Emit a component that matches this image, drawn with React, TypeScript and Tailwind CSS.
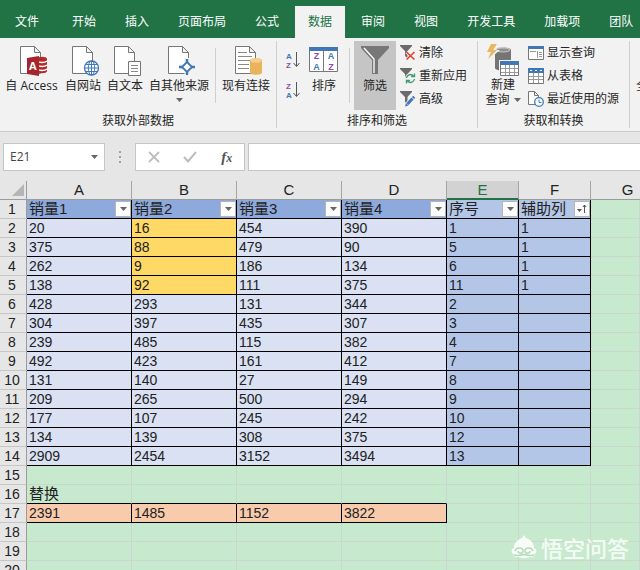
import type { ReactNode } from "react";

const tabs = ["开始", "插入", "页面布局", "公式", "数据", "审阅", "视图", "开发工具", "加载项", "团队"];
const columns = ["A", "B", "C", "D", "E", "F", "G"];
const headers = ["销量1", "销量2", "销量3", "销量4", "序号", "辅助列"];

const rows = [
  ["20", "16", "454", "390", "1", "1"],
  ["375", "88", "479", "90", "5", "1"],
  ["262", "9", "186", "134", "6", "1"],
  ["138", "92", "111", "375", "11", "1"],
  ["428", "293", "131", "344", "2", ""],
  ["304", "397", "435", "307", "3", ""],
  ["239", "485", "115", "382", "4", ""],
  ["492", "423", "161", "412", "7", ""],
  ["131", "140", "27", "149", "8", ""],
  ["209", "265", "500", "294", "9", ""],
  ["177", "107", "245", "242", "10", ""],
  ["134", "139", "308", "375", "12", ""],
  ["2909", "2454", "3152", "3494", "13", ""],
];

const totals = ["2391", "1485", "1152", "3822"];

const Page = () => (
  <path d="M.5.5h14l6 6v21H.5zM14.5.5v6h6" fill="#fff" stroke="#777" />
);

const AccessIcon = () => (
  <svg width="33" height="30" viewBox="-5 0 33 30">
    <Page />
    <path d="M17 13c0-3 10-3 10 0v12c0 3-10 3-10 0z" fill="#b3272d" />
    <path d="M17 15c2 2 8 2 10 0M17 19c2 2 8 2 10 0M17 23c2 2 8 2 10 0" fill="none" stroke="#fff" strokeWidth="1.3" />
    <path d="M7 12l12-2v20L7 28z" fill="#a4262c" />
    <text x="9" y="24" fontSize="11" fontWeight="700" fill="#fff" className="font-['Open_Sans',sans-serif]">A</text>
  </svg>
);

const WebIcon = () => (
  <svg width="33" height="30" viewBox="-5 0 33 30">
    <Page />
    <circle cx="19.500" cy="22" r="7" fill="#fff" stroke="#3f78b5" strokeWidth="1.3" />
    <ellipse cx="19.500" cy="22" rx="3.200" ry="7" fill="none" stroke="#3f78b5" />
    <path d="M12.500 22h14M19.500 15v14M14 18.500h11M14 25.500h11" stroke="#3f78b5" />
  </svg>
);

const TextIcon = () => (
  <svg width="33" height="30" viewBox="-5 0 33 30">
    <Page />
    <path d="M14.500 15.500h12v14h-12z" fill="#fff" stroke="#777" />
    <path d="M17 19.500h7M17 22.500h7M17 25.500h7" stroke="#888" />
  </svg>
);

const SourceIcon = () => (
  <svg width="33" height="30" viewBox="-5 0 33 30">
    <Page />
    <path d="M19 12v18M11 21h16" stroke="#f2f2f2" strokeWidth="5" />
    <path d="M19 13v4M19 25v4M11 21h4M23 21h4" stroke="#3f78b5" strokeWidth="2.400" />
    <path d="M19 16l5 5-5 5-5-5z" fill="#fff" stroke="#3f78b5" strokeWidth="1.800" />
  </svg>
);

const ConnectionIcon = () => (
  <svg width="33" height="30" viewBox="-5 0 33 30">
    <Page />
    <path d="M3 6.500h9M3 10.500h14M3 14.500h12M3 18.500h11M3 22.500h11" stroke="#888" />
    <path d="M15 14.500c0-3 12-3 12 0v12c0 3-12 3-12 0z" fill="#e9b45c" />
    <ellipse cx="21" cy="14.500" rx="6" ry="2.200" fill="#f3cf8d" />
  </svg>
);

const SortOrderIcon = ({ top, bottom }: { top: string; bottom: string }) => (
  <svg width="14" height="19" viewBox="0 0 14 19" className="font-['Liberation_Sans',sans-serif]">
    <text x="0" y="8" fontSize="8" fontWeight="700" fill={top === "A" ? "#3f78b5" : "#8b4fa8"}>{top}</text>
    <text x="0" y="17" fontSize="8" fontWeight="700" fill={bottom === "A" ? "#3f78b5" : "#8b4fa8"}>{bottom}</text>
    <path d="M10.500 1v14M7.500 12l3 3.500 3-3.500" fill="none" stroke="#555" />
  </svg>
);

const SortIcon = () => (
  <svg width="30" height="30" viewBox="0 0 30 30">
    <path d="M.5 1.500h28v24H.5z" fill="#fff" stroke="#777" />
    <path d="M0 1h29v4H0z" fill="#3f78b5" />
    <path d="M14.500 5v21" stroke="#777" />
    <g fontSize="9" fontWeight="700" textAnchor="middle" className="font-['Liberation_Sans',sans-serif]">
      <text x="7.500" y="13" fill="#8b4fa8">Z</text>
      <text x="7.500" y="24" fill="#3f78b5">A</text>
      <text x="22" y="13" fill="#3f78b5">A</text>
      <text x="22" y="24" fill="#8b4fa8">Z</text>
    </g>
  </svg>
);

const FilterIcon = () => (
  <svg width="28" height="30" viewBox="0 0 28 30">
    <path d="M0 0h28v2L17 14v14h-6V14L0 2z" fill="#777" />
    <path d="M3 2l10 11v14" fill="none" stroke="#fff" strokeWidth="1.300" />
  </svg>
);

const SmallFunnel = () => <path d="M0 0h12v1L7.500 6v7L5 11V6L0 1z" fill="#6b6b6b" />;

const ClearIcon = () => (
  <svg width="16" height="16" viewBox="0 0 16 16">
    <SmallFunnel />
    <path d="M6.500 7l8 8M14.500 7l-8 8" stroke="#f2f2f2" strokeWidth="3" />
    <path d="M6.500 7l8 7.500M14.500 7l-8 7.500" stroke="#e0402f" strokeWidth="1.600" />
  </svg>
);

const ReapplyIcon = () => (
  <svg width="16" height="16" viewBox="0 0 16 16">
    <SmallFunnel />
    <circle cx="10.500" cy="10.500" r="5.500" fill="#f2f2f2" />
    <path d="M6.500 10a4 4 0 0 1 7-2M14.500 11a4 4 0 0 1-7 2M14.500 5.500v3h-3.500M6.500 15.500v-3H10" fill="none" stroke="#4a9a76" strokeWidth="1.400" />
  </svg>
);

const AdvancedIcon = () => (
  <svg width="16" height="16" viewBox="0 0 16 16">
    <SmallFunnel />
    <path d="M6 15l8-8.500" stroke="#f2f2f2" strokeWidth="5" />
    <path d="M7.500 13l5-5.500M13 7l1.200-1.200" stroke="#3f78b5" strokeWidth="3" />
    <path d="M5 15.500l1-3.500 2.500 2.500z" fill="#3f78b5" />
  </svg>
);

const NewQueryIcon = () => (
  <svg width="34" height="33" viewBox="0 0 34 33">
    <path d="M9 6c0-3.500 16-3.500 16 0v18c0 3.500-16 3.500-16 0z" fill="#757575" />
    <ellipse cx="17" cy="6" rx="7" ry="2" fill="#8f8f8f" stroke="#f2f2f2" strokeWidth=".6" />
    <path d="M6-1h8l-4 7h4L1 17l4-8H0z" fill="#f2f2f2" />
    <path d="M5 0h6L7 6h4L2 15l3-7H1z" fill="#eab75f" />
    <path d="M13 16h20v16H13z" fill="#f2f2f2" />
    <path d="M14.500 17.500h18v14h-18z" fill="#fff" stroke="#777" />
    <path d="M14 17h19v4H14z" fill="#3f78b5" />
    <path d="M15 24.500h17M15 28.500h17M19.500 21v10M23.500 21v10M28.500 21v10" stroke="#999" />
  </svg>
);

const ShowQueryIcon = () => (
  <svg width="16" height="16" viewBox="0 0 16 16">
    <path d="M.5 1.500h15v13H.5z" fill="#fff" stroke="#777" />
    <path d="M0 1h16v3H0z" fill="#3f78b5" />
    <path d="M2 6.500h6M9.500 6v7M11 7.500h3M11 9.500h3M11 11.500h3" stroke="#999" />
  </svg>
);

const FromTableIcon = () => (
  <svg width="16" height="16" viewBox="0 0 16 16">
    <path d="M.5.5h15v15H.5z" fill="#fff" stroke="#777" />
    <path d="M0 0h16v5H0z" fill="#3f78b5" />
    <path d="M2 2.500h2M7 2.500h2M12 2.500h2" stroke="#fff" />
    <path d="M1 8.500h14M1 11.500h14M5.500 5v10M10.500 5v10" stroke="#999" />
  </svg>
);

const RecentIcon = () => (
  <svg width="16" height="16" viewBox="0 0 16 16">
    <path d="M.5.5h6l4 4v9H.5zM6.500.5v4h4" fill="#fff" stroke="#777" />
    <circle cx="11" cy="11" r="4.300" fill="#fff" stroke="#3f78b5" strokeWidth="1.300" />
    <path d="M11 8.500v3h2.500" fill="none" stroke="#3f78b5" />
  </svg>
);

const Caret = () => (
  <svg width="7" height="4" viewBox="0 0 7 4" className="shrink-0">
    <path d="M0 0h7L3.500 4z" fill="#666" />
  </svg>
);

const LargeButton = ({ icon, label, className = "", caret = false }: { icon: ReactNode; label: string; className?: string; caret?: boolean }) => (
  <button className={`flex h-[69px] shrink-0 flex-col items-center whitespace-nowrap pt-[5px] ${className}`}>
    {icon}
    <span className="mt-0.5 leading-4">{label}</span>
    {caret && <span className="mt-1"><Caret /></span>}
  </button>
);

const SmallButton = ({ icon, label }: { icon: ReactNode; label: string }) => (
  <button className="flex h-[23px] items-center gap-[3px] whitespace-nowrap">
    {icon}
    {label}
  </button>
);

const Divider = () => <div className="mt-[7px] h-[55px] w-px shrink-0 bg-[#cfcfcf]" />;

const Group = ({ title, children }: { title: string; children: ReactNode }) => (
  <section className="flex shrink-0 flex-col border-r border-[#cfcfcf]">
    <div className="flex h-[69px]">{children}</div>
    <h2 className="mt-[3px] text-center leading-4">{title}</h2>
  </section>
);

const Ribbon = () => (
  <div className="flex h-[94px] shrink-0 overflow-hidden border-b border-[#cdcdcd] bg-[#f2f2f2] py-[3px] font-['Open_Sans','Noto_Sans_CJK_SC',sans-serif] text-xs text-[#262626]">
    <Group title="获取外部数据">
      <div className="flex gap-[6px] pl-1 pr-[6px]">
        <LargeButton icon={<AccessIcon />} label="自 Access" className="w-[55px]" />
        <LargeButton icon={<WebIcon />} label="自网站" />
        <LargeButton icon={<TextIcon />} label="自文本" />
        <LargeButton icon={<SourceIcon />} label="自其他来源" caret />
      </div>
      <Divider />
      <div className="px-[6px]">
        <LargeButton icon={<ConnectionIcon />} label="现有连接" />
      </div>
    </Group>
    <Group title="排序和筛选">
      <div className="flex flex-col gap-[11px] px-[9px] pt-[10px]">
        <button aria-label="升序"><SortOrderIcon top="A" bottom="Z" /></button>
        <button aria-label="降序"><SortOrderIcon top="Z" bottom="A" /></button>
      </div>
      <LargeButton icon={<SortIcon />} label="排序" className="mr-[10px]" />
      <Divider />
      <LargeButton icon={<FilterIcon />} label="筛选" className="mx-1 w-[42px] bg-[#c5c5c5]" />
      <div className="pr-[10px]">
        <SmallButton icon={<ClearIcon />} label="清除" />
        <SmallButton icon={<ReapplyIcon />} label="重新应用" />
        <SmallButton icon={<AdvancedIcon />} label="高级" />
      </div>
    </Group>
    <Group title="获取和转换">
      <button className="flex w-[50px] flex-col items-center pt-[3px] leading-[15px]">
        <NewQueryIcon />
        <span>新建</span>
        <span className="flex items-center gap-1">查询<Caret /></span>
      </button>
      <div className="pr-[10px]">
        <SmallButton icon={<ShowQueryIcon />} label="显示查询" />
        <SmallButton icon={<FromTableIcon />} label="从表格" />
        <SmallButton icon={<RecentIcon />} label="最近使用的源" />
      </div>
    </Group>
    <button className="ml-[6px] mt-[37px] h-4 shrink-0 leading-4">全部刷新</button>
  </div>
);

const FormulaBar = () => (
  <div className="flex shrink-0 pb-[10px] pl-[3px] pt-[11px] text-[#444]">
    <div className="flex h-7 w-[102px] shrink-0 items-center border border-[#c6c6c6] bg-white">
      <input aria-label="名称框" defaultValue="E21" className="w-20 bg-transparent pl-[6px] font-['Open_Sans',sans-serif] text-xs outline-none" />
      <button aria-label="展开名称框" className="ml-[7px]"><Caret /></button>
    </div>
    <div className="flex w-[30px] shrink-0 flex-col items-center justify-center gap-[3px]">
      <i className="size-0.5 bg-[#a0a0a0]" />
      <i className="size-0.5 bg-[#a0a0a0]" />
      <i className="size-0.5 bg-[#a0a0a0]" />
    </div>
    <div className="flex h-7 w-[110px] shrink-0 items-center justify-around border border-[#c6c6c6] bg-white">
      <button aria-label="取消">
        <svg width="12" height="12" viewBox="0 0 12 12"><path d="M1 1l10 10M11 1L1 11" stroke="#bdbdbd" strokeWidth="1.800" /></svg>
      </button>
      <button aria-label="输入">
        <svg width="14" height="12" viewBox="0 0 14 12"><path d="M1 6l4 4.500L13 1" fill="none" stroke="#bdbdbd" strokeWidth="2" /></svg>
      </button>
      <button aria-label="插入函数" className="font-['Liberation_Serif',serif] text-[15px] font-bold italic leading-4 text-[#555]">
        f<span className="text-xs">x</span>
      </button>
    </div>
    <input aria-label="编辑栏" className="ml-[3px] h-7 min-w-0 flex-1 border border-r-0 border-[#c6c6c6] bg-white px-2 text-[13px] outline-none" />
  </div>
);

const FilterButton = ({ sorted }: { sorted: boolean }) => (
  <button aria-label="筛选" className="flex size-4 shrink-0 items-center justify-center border border-[#b5b5b5] bg-[#fcfcfc]">
    {sorted ? (
      <svg width="12" height="12" viewBox="0 0 12 12">
        <path d="M1 6h5L3.500 9z" fill="#555" />
        <path d="M8.500 10V2M7 4l1.500-2L10 4" fill="none" stroke="#555" />
      </svg>
    ) : (
      <Caret />
    )}
  </button>
);

const bodyColor = (row: number, col: number) => {
  if (col > 3) return "bg-[#b4c6e7]";
  if (col === 1 && row < 4) return "bg-[#ffd966]";
  return "bg-[#d9e1f2]";
};

const RowHeader = ({ n }: { n: number }) => (
  <th scope="row" className="h-[19px] border-b border-r border-b-[#c6c6c6] border-r-[#9b9b9b] bg-[#e6e6e6] p-0 pr-0.5 font-normal">
    {n}
  </th>
);

const Cell = ({ children, className = "border-[#c9d8cd]" }: { children?: ReactNode; className?: string }) => (
  <td className={`h-[19px] border-b border-r pl-0.5 ${className}`}>{children}</td>
);

const Sheet = () => (
  <table className="w-full table-fixed border-separate border-spacing-0 bg-[#c7eace] font-['Liberation_Sans','Noto_Sans_CJK_SC',sans-serif] text-sm leading-[18px] text-[#222]">
    <colgroup>
      <col className="w-[27px]" />
      <col className="w-[105px]" />
      <col className="w-[105px]" />
      <col className="w-[105px]" />
      <col className="w-[105px]" />
      <col className="w-[72px]" />
      <col className="w-[72px]" />
      <col />
    </colgroup>
    <thead>
      <tr className="bg-[#e6e6e6]">
        <td className="h-[19px] border-b border-r border-[#9b9b9b]">
          <svg width="12" height="12" viewBox="0 0 12 12" className="ml-3"><path d="M12 0v12H0z" fill="#b5b5b5" /></svg>
        </td>
        {columns.map((c) => (
          <th
            key={c}
            scope="col"
            className={`h-[19px] border-r border-r-[#a6a6a6] text-[15px] font-normal ${
              c === "E" ? "border-b-2 border-b-[#217346] bg-[#d2d2d2] leading-[17px] text-[#217346]" : "border-b border-b-[#9b9b9b]"
            } ${c === "G" ? "border-r-0 pl-6" : ""}`}
          >
            {c}
          </th>
        ))}
      </tr>
    </thead>
    <tbody>
      <tr>
        <RowHeader n={1} />
        {headers.map((h, i) => (
          <Cell key={h} className={`border-black text-[15px] ${i < 4 ? "bg-[#8ea9db]" : "bg-[#b4c6e7]"}`}>
            <div className="flex h-[18px] items-center justify-between whitespace-nowrap">
              {h}
              <FilterButton sorted={i === 5} />
            </div>
          </Cell>
        ))}
        <Cell />
      </tr>
      {rows.map((row, r) => (
        <tr key={r}>
          <RowHeader n={r + 2} />
          {row.map((v, c) => (
            <Cell key={c} className={`border-black ${bodyColor(r, c)}`}>{v}</Cell>
          ))}
          <Cell />
        </tr>
      ))}
      <tr>
        <RowHeader n={15} />
        {columns.map((c) => <Cell key={c} />)}
      </tr>
      <tr>
        <RowHeader n={16} />
        {columns.map((c, i) => (
          <Cell key={c} className={`border-r-[#c9d8cd] text-[15px] ${i < 4 ? "border-b-black" : "border-b-[#c9d8cd]"}`}>
            {i === 0 && "替换"}
          </Cell>
        ))}
      </tr>
      <tr>
        <RowHeader n={17} />
        {totals.map((v) => <Cell key={v} className="border-black bg-[#f8cbad]">{v}</Cell>)}
        <Cell />
        <Cell />
        <Cell />
      </tr>
      {[18, 19, 20].map((n) => (
        <tr key={n}>
          <RowHeader n={n} />
          {columns.map((c) => <Cell key={c} />)}
        </tr>
      ))}
    </tbody>
  </table>
);

const Watermark = () => (
  <div className="absolute bottom-[11px] right-[11px] flex items-center gap-1 text-[22px] font-medium leading-6 text-white/80">
    <svg width="26" height="24" viewBox="0 0 26 24">
      <path d="M13 0c1 2 2 3 4 4 3 1.500 6 4 6 9 3 1 3 5 .5 6 .5 2.500-2 4-4.500 3-4 1.500-8 1.500-12 0-2.500 1-5-.5-4.500-3C0 18 0 14 3 13c0-5 3-7.500 6-9 2-1 3-2 4-4z" fill="#fff" fillOpacity=".85" />
      <path d="M4 16c1-4 8-4 8 0 0 3-5 3-5 0M22 16c-1-4-8-4-8 0 0 3 5 3 5 0M3 20c3 1 6 .5 10-.5 4 1 7 1.500 10 .5" fill="none" stroke="#b4d9bc" strokeWidth="1.500" />
    </svg>
    悟空问答
  </div>
);

export default function App() {
  return (
    <div className="relative flex h-screen flex-col overflow-hidden bg-[#e6e6e6] font-['Noto_Sans_CJK_SC',sans-serif]">
      <nav className="flex h-[38px] shrink-0 items-end gap-[3px] overflow-hidden whitespace-nowrap bg-[#217346] text-xs text-white">
        <button className="h-8 pb-0.5 pl-[15px] pr-[17px]">文件</button>
        {tabs.map((t) => (
          <button key={t} className={`h-8 shrink-0 px-[13px] pb-0.5 ${t === "数据" ? "bg-[#f2f2f2] text-[#217346]" : ""}`}>
            {t}
          </button>
        ))}
      </nav>
      <Ribbon />
      <FormulaBar />
      <Sheet />
      <Watermark />
    </div>
  );
}
